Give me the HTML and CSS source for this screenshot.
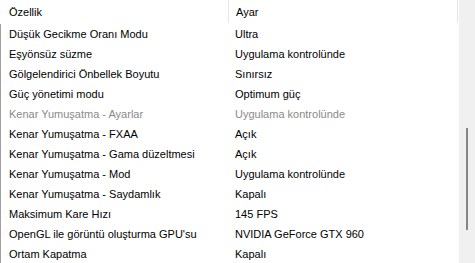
FILE: index.html
```html
<!DOCTYPE html>
<html lang="tr">

<head>
    <meta charset="UTF-8">
    <meta name="viewport" content="width=device-width, initial-scale=1.0">
    <title>Ayarlar</title>
    <link rel="stylesheet" href="styles.css">
</head>

<body>
    <div class="view">
        <div class="list">
            <div class="head">
                <div class="hcell first">Özellik</div>
                <div class="hcell">Ayar</div>
            </div>
            <div class="rows">
                <div class="row"><span>Düşük Gecikme Oranı Modu</span><span>Ultra</span></div>
                <div class="row"><span>Eşyönsüz süzme</span><span>Uygulama kontrolünde</span></div>
                <div class="row"><span>Gölgelendirici Önbellek Boyutu</span><span>Sınırsız</span></div>
                <div class="row"><span>Güç yönetimi modu</span><span>Optimum güç</span></div>
                <div class="row disabled"><span>Kenar Yumuşatma - Ayarlar</span><span>Uygulama kontrolünde</span></div>
                <div class="row"><span>Kenar Yumuşatma - FXAA</span><span>Açık</span></div>
                <div class="row"><span>Kenar Yumuşatma - Gama düzeltmesi</span><span>Açık</span></div>
                <div class="row"><span>Kenar Yumuşatma - Mod</span><span>Uygulama kontrolünde</span></div>
                <div class="row"><span>Kenar Yumuşatma - Saydamlık</span><span>Kapalı</span></div>
                <div class="row"><span>Maksimum Kare Hızı</span><span>145 FPS</span></div>
                <div class="row"><span>OpenGL ile görüntü oluşturma GPU'su</span><span>NVIDIA GeForce GTX 960</span></div>
                <div class="row"><span>Ortam Kapatma</span><span>Kapalı</span></div>
            </div>
        </div>
        <div class="scroll">
            <div class="thumb"></div>
        </div>
    </div>
</body>

</html>
```

FILE: styles.css
```css
* {
    box-sizing: border-box;
}

body {
    margin: 0;
    font-family: "Liberation Sans", Arial, sans-serif;
    font-size: 11px;
    color: #000;
    background-color: #fff;
}

.view {
    display: flex;
    height: 263px;
    overflow: hidden;
}

.list {
    width: 459px;
}

.head {
    display: flex;
    height: 24px;
}

.hcell {
    width: 229px;
    padding: 6px 0 0 7px;
    border-right: 1px solid #e5e5e5;
    height: 23px;
}

.hcell.first {
    padding-left: 9px;
}

.rows {
    border-left: 1px solid #a0a0a0;
}

.row {
    display: grid;
    grid-template-columns: 226px 1fr;
    height: 20px;
    align-items: center;
    padding-left: 8px;
    white-space: nowrap;
}

.row.disabled {
    color: #8a8a8a;
}

.scroll {
    width: 16px;
    background-color: #f0f0f0;
}

.thumb {
    width: 2px;
    height: 102px;
    margin: 128px 0 0 7px;
    background-color: #858585;
}
```
